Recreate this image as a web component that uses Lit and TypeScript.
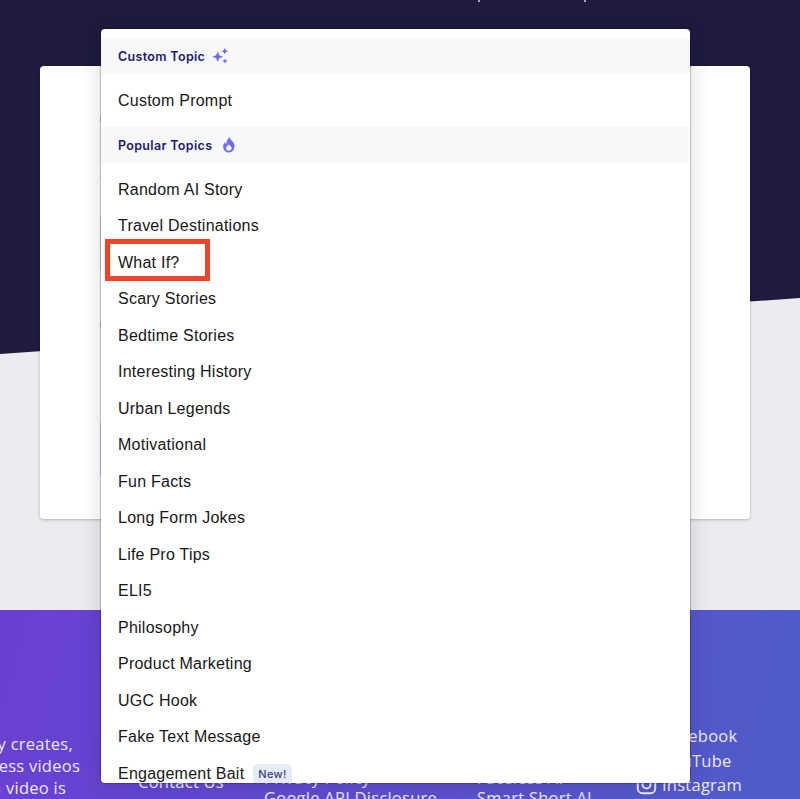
import { LitElement, html, css } from "lit";
import { customElement } from "lit/decorators.js";

const TOPICS = [
  "Random AI Story", "Travel Destinations", "What If?", "Scary Stories", "Bedtime Stories",
  "Interesting History", "Urban Legends", "Motivational", "Fun Facts", "Long Form Jokes",
  "Life Pro Tips", "ELI5", "Philosophy", "Product Marketing", "UGC Hook", "Fake Text Message",
];

@customElement("app-root")
export class AppRoot extends LitElement {
  static styles = css`
    :host { display: block; position: relative; width: 800px; height: 799px; overflow: hidden; background: #ecebf1; font-family: "Liberation Sans", Arial, sans-serif; }
    .hero-bg { position: absolute; inset: 0 0 auto 0; height: 354px; background: #1e1b3f; clip-path: polygon(0 0, 100% 0, 100% 298px, 0 354px); }
    .main { position: relative; display: flex; flex-direction: column; padding: 0 50px 0 40px; }
    .ticks { display: flex; height: 2px; padding-left: 438px; gap: 104px; }
    .ticks i { width: 2px; height: 2px; background: #a9a8b8; }
    .card { margin-top: 64px; height: 453px; background: #fff; border-radius: 4px; box-shadow: 0 1px 3px rgba(0,0,0,.25); box-sizing: border-box; padding: 49px 0 0 60px; display: flex; flex-direction: column; align-items: flex-start; }
    .sl { width: 1px; background: #cfd0e4; }
    .s1 { height: 7px; }
    .s2 { height: 1px; margin-top: 55px; background: #c9c9cc; }
    .s3 { height: 53px; margin-top: 39px; background: #d8d8da; }
    .s4 { height: 6px; margin-top: 52px; }
    .s5 { height: 52px; margin-top: 95px; }
    footer { position: relative; margin-top: 91px; height: 189px; box-sizing: border-box; background: linear-gradient(105deg, #6a3fd3 0%, #5a50cd 60%, #4f5cc9 100%); color: #ece9fb; font-family: "Open Sans", sans-serif; font-size: 16.5px; letter-spacing: .25px; display: flex; }
    .col { display: flex; flex-direction: column; white-space: nowrap; }
    .about { width: 138px; box-sizing: border-box; padding-top: 123px; line-height: 22px; align-items: flex-end; padding-right: 58px; }
    .about .l1 { margin-right: 7px; }
    .about .l3 { margin-right: 14px; }
    .contact { width: 126px; padding-top: 160px; }
    .legal { width: 213px; padding-top: 158px; line-height: 20px; }
    .products { width: 159px; padding-top: 158px; line-height: 20px; }
    .social { padding-top: 114px; gap: 1.5px; line-height: 23px; }
    .social div { display: flex; align-items: center; gap: 5px; }
    .social svg { width: 21px; height: 21px; flex: none; }
    .menu { position: absolute; left: 101px; top: 29px; width: 589px; height: 754px; overflow: hidden; background: #fff; border-radius: 4px; box-shadow: 0 0 1px 1px rgba(0,0,20,.22), 0 0 22px rgba(0,0,0,.14); box-sizing: border-box; padding-top: 9px; }
    .head { display: flex; align-items: center; height: 36px; margin-right: 1px; padding-left: 17px; background: #f7f8fa; color: #1e1a70; font-family: Inter, sans-serif; font-weight: 600; font-size: 12.5px; letter-spacing: .33px; }
    .head.a { gap: 6px; }
    .head.b { gap: 8px; }
    .head svg { width: 18px; height: 18px; }
    .custom { height: 53px; display: flex; align-items: center; padding-left: 17px; }
    .item, .custom { color: #17171a; font-size: 16px; letter-spacing: .24px; }
    .list { padding-top: 8.5px; }
    .item { height: 36.5px; display: flex; align-items: center; gap: 9px; padding-left: 17px; }
    .badge { font-family: Inter, sans-serif; font-size: 11px; font-weight: 500; color: #3c3f80; background: #e6ebf9; border-radius: 5px; padding: 3px 5px; letter-spacing: .3px; }
    .mark { position: absolute; left: 105px; top: 239px; width: 105px; height: 42px; box-sizing: border-box; border: 5px solid #ee4527; }
  `;

  render() {
    return html`
      <div class="hero-bg"></div>
      <div class="main">
        <div class="ticks"><i></i><i></i></div>
        <div class="card">
          <div class="sl s1"></div><div class="sl s2"></div><div class="sl s3"></div><div class="sl s4"></div><div class="sl s5"></div>
        </div>
      </div>
      <footer>
        <div class="col about"><span class="l1">y creates,</span><span>ess videos</span><span class="l3">n video is</span></div>
        <div class="col contact"><span>Contact Us</span></div>
        <div class="col legal"><span>Privacy Policy</span><span>Google API Disclosure</span></div>
        <div class="col products"><span>Faceless AI</span><span>Smart Short AI</span></div>
        <div class="col social">
          <div><svg viewBox="0 0 24 24"></svg><span>Facebook</span></div>
          <div><svg viewBox="0 0 24 24"></svg><span>YouTube</span></div>
          <div>
            <svg viewBox="0 0 24 24" fill="none" stroke="currentColor" stroke-width="2.2"><rect x="2" y="2" width="20" height="20" rx="5.5"></rect><circle cx="12" cy="12" r="4.6"></circle><circle cx="17.6" cy="6.4" r=".6"></circle></svg>
            <span>Instagram</span>
          </div>
        </div>
      </footer>
      <div class="menu">
        <div class="head a">
          <span>Custom Topic</span>
          <svg viewBox="0 0 18 18" fill="#6c6cf5"><path d="M6.700 4.500 8.300 8.300 12.200 9.800 8.300 11.300 6.700 15.100 5.100 11.300 1.200 9.800 5.100 8.300Z"></path><path d="M13.800 .8 14.800 3.200 17.200 4.200 14.800 5.200 13.800 7.600 12.800 5.200 10.400 4.200 12.800 3.200Z"></path><path d="M14 11.400 14.800 13.300 16.700 14.100 14.800 14.900 14 16.800 13.200 14.900 11.300 14.100 13.200 13.300Z"></path></svg>
        </div>
        <div class="custom">Custom Prompt</div>
        <div class="head b">
          <span>Popular Topics</span>
          <svg viewBox="0 0 18 18" fill="#6c6cf5"><path fill-rule="evenodd" d="M9.800 1c.2 2 1.300 3 2.500 4.200 1.200 1.200 2.200 2.700 2.200 4.800 0 3.700-2.500 6.500-5.700 6.500S3.200 13.900 3.200 10.700c0-1.900.8-3.400 1.900-4.400.2 1 .6 1.700 1.200 2.100C6.300 5.600 7.600 2.800 9.800 1ZM8.900 8.400c-.6 1.200-2.900 1.800-2.900 3.900 0 1.500 1.200 2.400 2.800 2.400s2.900-1 2.900-2.600c0-1.800-1.800-2.400-2.800-3.700Z"></path></svg>
        </div>
        <div class="list">
          ${TOPICS.map((t) => html`<div class="item">${t}</div>`)}
          <div class="item">Engagement Bait <span class="badge">New!</span></div>
        </div>
      </div>
      <div class="mark"></div>
    `;
  }
}
